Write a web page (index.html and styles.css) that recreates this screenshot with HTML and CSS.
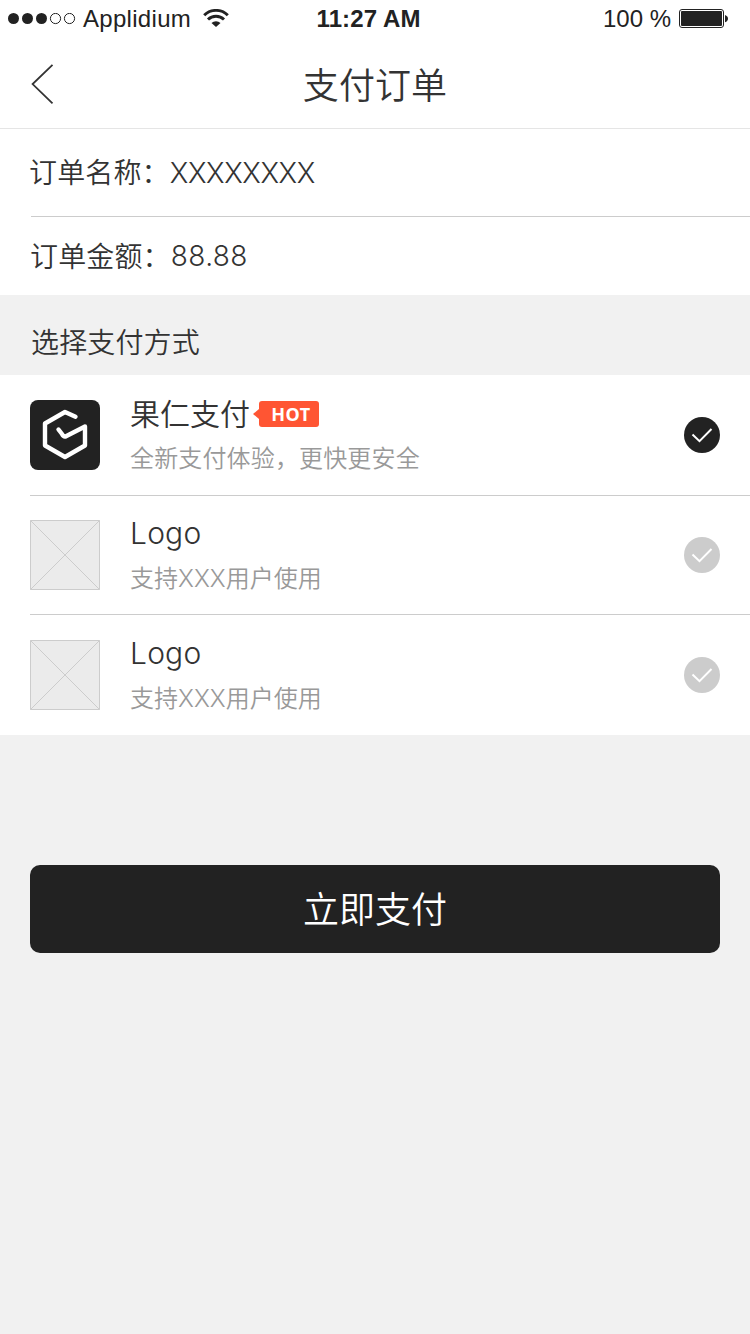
FILE: index.html
```html
<!DOCTYPE html>
<html lang="zh-CN">
<head>
<meta charset="utf-8">
<title>支付订单</title>
<link rel="stylesheet" href="styles.css">
</head>
<body>
<div class="status">
  <div class="carrier">
    <svg class="dots" width="68" height="12" viewBox="0 0 68 12"><g fill="#222"><circle cx="5.5" cy="5.500" r="5.5"/><circle cx="19.5" cy="5.500" r="5.5"/><circle cx="33.5" cy="5.500" r="5.5"/></g><g fill="none" stroke="#222"><circle cx="47.5" cy="5.500" r="5.1"/><circle cx="61.5" cy="5.500" r="5.1"/></g></svg>
    <span class="carrier-name">Applidium</span>
    <svg class="wifi" width="26" height="18" viewBox="0 0 26 18"><g fill="none" stroke="#222" stroke-width="2.9"><path d="M1.2 6.3a16.6 16.6 0 0 1 23.6 0"/><path d="M5 10.600a11.3 11.3 0 0 1 16 0"/></g><path d="M8.500 14a6.500 6.500 0 0 1 9 0L13 18z" fill="#222"/></svg>
  </div>
  <span class="time">11:27 AM</span>
  <div class="power">
    <span class="percent">100 %</span>
    <svg width="50" height="20" viewBox="0 0 50 20"><rect x=".5" y=".5" width="44" height="18" rx="2.5" fill="none" stroke="#222"/><rect x="2" y="2" width="41" height="15" rx="1" fill="#222"/><path d="M46 6c4 1.4 4 5.900 0 7.300z" fill="#222"/></svg>
  </div>
</div>
<header class="nav">
  <svg class="back" width="24" height="42" viewBox="0 0 24 42"><path d="M22.500 1.800L2.600 21.100 22.500 40.400" fill="none" stroke="#333" stroke-width="1.800"/></svg>
  <h1 class="title">支付订单</h1>
</header>
<main>
  <section class="order">
    <div class="order-row name-row"><span>订单名称：</span><span class="order-name">XXXXXXXX</span></div>
    <div class="order-row amount-row"><span>订单金额：</span><span class="amount">88.88</span></div>
  </section>
  <h2 class="section-title">选择支付方式</h2>
  <section class="methods">
    <div class="method">
      <svg class="logo" width="70" height="70" viewBox="0 0 70 70"><rect width="70" height="70" rx="8" fill="#222"/><path d="M45.500 16.700L35 12 15 23.500V45.500L35 57 55 45.500V26.500L35.500 36.500Q33.500 37 32 34L28.500 29.500" fill="none" stroke="#fff" stroke-width="4.400" stroke-linejoin="round" stroke-linecap="round"/></svg>
      <div class="info">
        <div class="method-name"><span class="cjk-name">果仁支付</span><span class="hot">HOT</span></div>
        <div class="desc">全新支付体验，更快更安全</div>
      </div>
      <svg class="check selected" width="36" height="36" viewBox="0 0 36 36"><circle cx="18" cy="18" r="18"/><path d="M8.500 17.500l7 6.700L27.500 12"/></svg>
    </div>
    <div class="method second">
      <svg class="logo" width="70" height="70" viewBox="0 0 70 70"><path d="M.5.5h69v69H.5zL69.500 69.500M69.500.5L.5 69.500" fill="#ebebeb" stroke="#ccc"/></svg>
      <div class="info">
        <div class="method-name latin">Logo</div>
        <div class="desc mixed">支持<span class="desc-latin">XXX</span>用户使用</div>
      </div>
      <svg class="check" width="36" height="36" viewBox="0 0 36 36"><circle cx="18" cy="18" r="18"/><path d="M8.500 17.500l7 6.700L27.500 12"/></svg>
    </div>
    <div class="method">
      <svg class="logo" width="70" height="70" viewBox="0 0 70 70"><path d="M.5.5h69v69H.5zL69.500 69.500M69.500.5L.5 69.500" fill="#ebebeb" stroke="#ccc"/></svg>
      <div class="info">
        <div class="method-name latin">Logo</div>
        <div class="desc mixed">支持<span class="desc-latin">XXX</span>用户使用</div>
      </div>
      <svg class="check" width="36" height="36" viewBox="0 0 36 36"><circle cx="18" cy="18" r="18"/><path d="M8.500 17.500l7 6.700L27.500 12"/></svg>
    </div>
  </section>
  <button class="pay">立即支付</button>
</main>
</body>
</html>
```
FILE: styles.css
```css
* { box-sizing: border-box; }
body {
  margin: 0;
  min-height: 1334px;
  background: #f1f1f1;
  color: #333;
  font-family: "Noto Sans CJK SC DemiLight", "Noto Sans CJK SC", sans-serif;
  font-weight: 350;
}
svg { display: block; flex: none; }
.status {
  display: grid;
  grid-template-columns: 1fr auto 1fr;
  align-items: center;
  height: 40px;
  padding: 0 21px 2px 8px;
  background: #fff;
  color: #222;
  font: 400 24px/38px "Liberation Sans", sans-serif;
}
.carrier { display: flex; align-items: center; }
.carrier-name { margin-left: 7px; letter-spacing: 0.3px; }
.wifi { margin-left: 12px; margin-top: -2px; }
.time { font-weight: 700; letter-spacing: 0.1px; }
.power { display: flex; align-items: center; justify-content: flex-end; gap: 8px; }
.nav {
  display: grid;
  grid-template-columns: 60px 1fr 60px;
  align-items: center;
  height: 89px;
  padding: 0 30px;
  background: #fff;
  border-bottom: 1px solid #e5e5e5;
}
.title { margin: 0; padding-bottom: 2px; font-size: 36px; line-height: 86px; font-weight: 350; text-align: center; letter-spacing: 0.1px; }
.order { background: #fff; }
.order-row { display: flex; font-size: 28px; letter-spacing: 0.15px; }
.name-row { height: 88px; margin-left: 31px; line-height: 85px; border-bottom: 1px solid #ccc; text-indent: -2px; }
.amount-row { height: 78px; padding-left: 31px; line-height: 76px; text-indent: -1px; }
.order-name, .amount, .latin, .desc-latin { font-family: Inter, "Noto Sans CJK SC", sans-serif; font-weight: 300; }
.order-name { padding: 2px 0 0 2px; letter-spacing: -0.4px; }
.amount { padding: 1px 0 0 1px; letter-spacing: 0.4px; }
.section-title { margin: 0; height: 80px; padding: 14px 31px 0; font-size: 28px; line-height: 64px; font-weight: 350; letter-spacing: 0.15px; }
.methods { background: #fff; padding-left: 30px; }
.method { display: flex; align-items: center; height: 120px; padding-right: 30px; }
.method.second { border-top: 1px solid #ccc; border-bottom: 1px solid #ccc; }
.info { flex: 1; margin-left: 30px; }
.method-name { display: flex; align-items: center; height: 41px; font-size: 30px; line-height: 41px; }
.cjk-name { padding-bottom: 3px; }
.method-name.latin { padding-bottom: 2px; letter-spacing: 0.2px; }
.desc { height: 38px; margin-top: 4px; padding-bottom: 5px; font-size: 24px; line-height: 36px; color: #999; letter-spacing: 0.15px; }
.desc.mixed { margin-top: 4px; letter-spacing: 0; }
.hot {
  position: relative;
  width: 60px;
  height: 26px;
  margin: 0 0 1px 9px;
  padding-left: 4px;
  border-radius: 3px;
  background: #ff5533;
  color: #fff;
  font-family: "Noto Sans", sans-serif;
  font-size: 18px;
  line-height: 26px;
  font-weight: 700;
  text-align: center;
  letter-spacing: 0.6px;
}
.hot::before {
  content: "";
  position: absolute;
  left: -6px;
  top: 8px;
  border: 5px solid transparent;
  border-left: 0;
  border-right: 6px solid #ff5533;
}
.check circle { fill: #ccc; }
.check path { fill: none; stroke: #fff; stroke-width: 2; }
.check.selected circle { fill: #222; }
.pay {
  display: block;
  width: 690px;
  height: 88px;
  margin: 130px 30px 0;
  padding: 0 0 4px;
  border: 0;
  border-radius: 10px;
  background: #222;
  color: #fff;
  font: 350 36px/84px "Noto Sans CJK SC DemiLight", "Noto Sans CJK SC", sans-serif;
}
```
